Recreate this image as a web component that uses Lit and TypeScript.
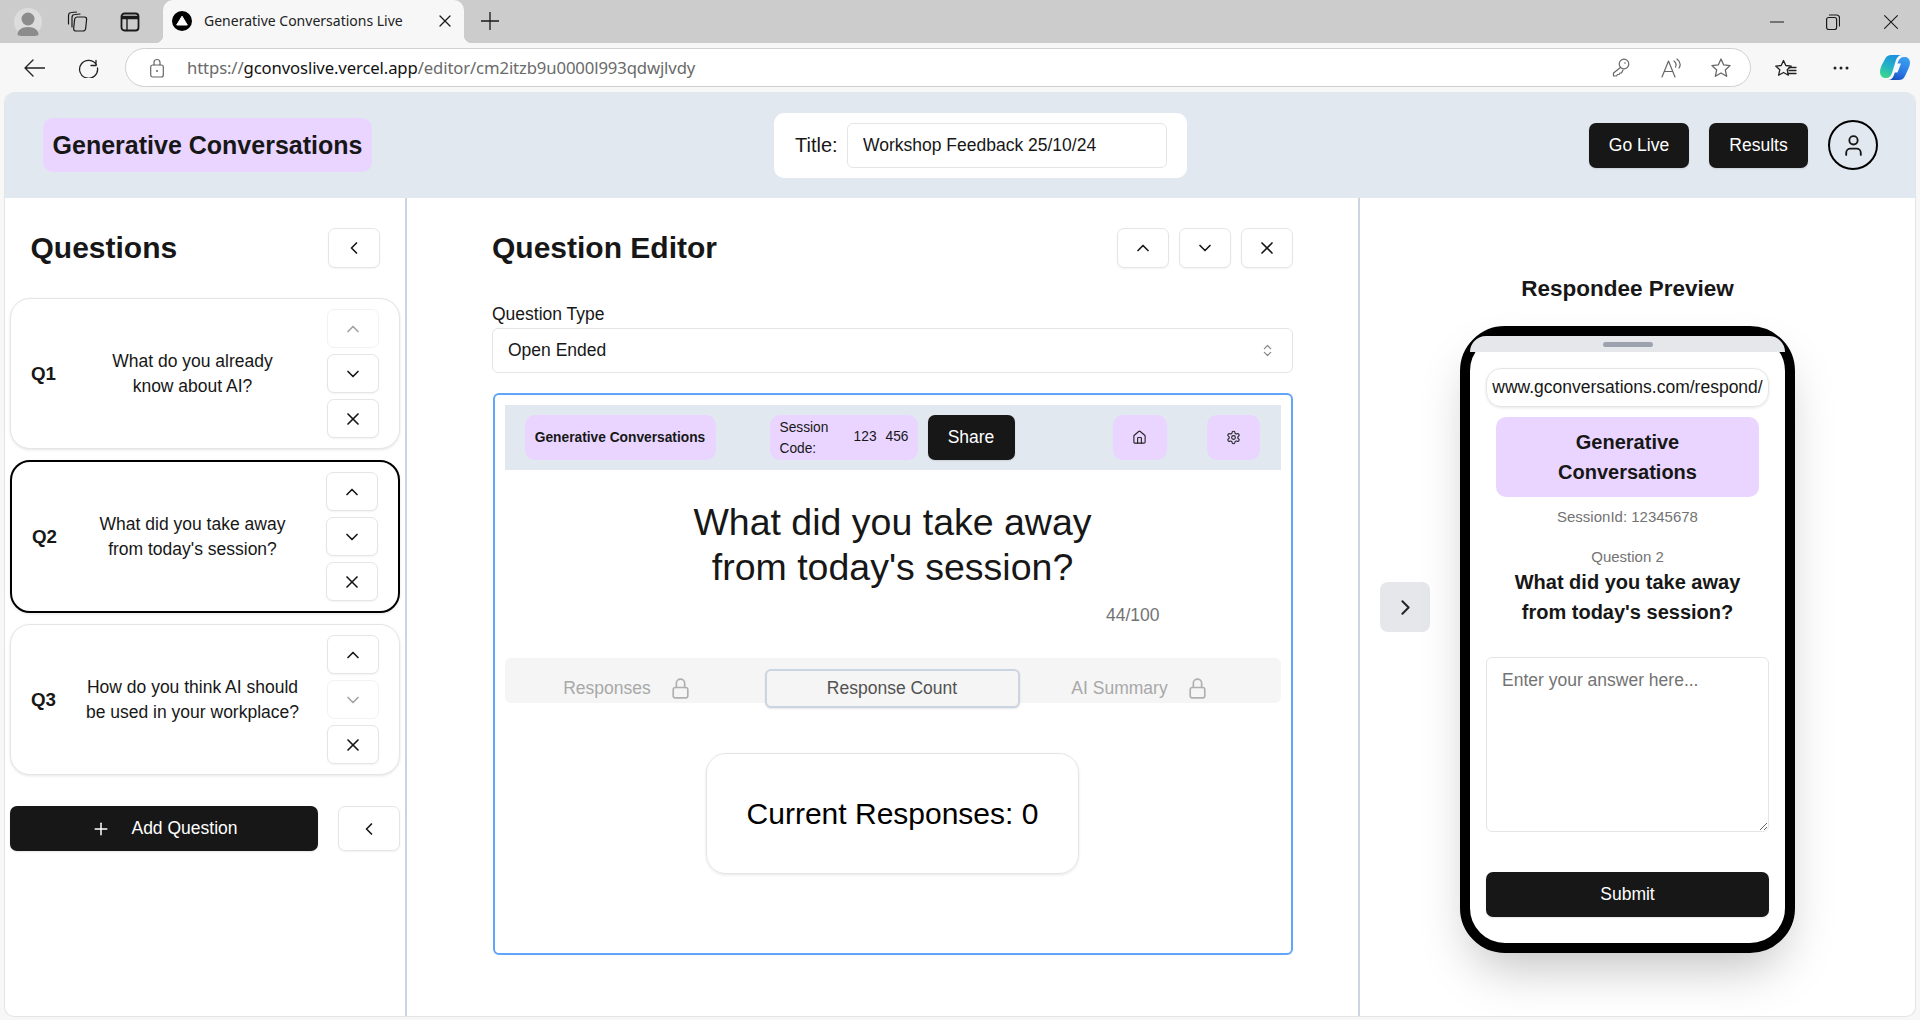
import { LitElement, html, css, svg } from "lit";
import { customElement } from "lit/decorators.js";

const lucide = (paths: unknown, size = 20, cls = "", sw = 2) => html`<svg class=${cls} width=${size} height=${size} viewBox="0 0 24 24" fill="none" stroke="currentColor" stroke-width=${sw} stroke-linecap="round" stroke-linejoin="round">${paths}</svg>`;
const up = svg`<path d="m18 15-6-6-6 6"/>`;
const down = svg`<path d="m6 9 6 6 6-6"/>`;
const left = svg`<path d="m15 18-6-6 6-6"/>`;
const right = svg`<path d="m9 18 6-6-6-6"/>`;
const cross = svg`<path d="M18 6 6 18"/><path d="m6 6 12 12"/>`;
const plus = svg`<path d="M5 12h14"/><path d="M12 5v14"/>`;
const lock = svg`<rect x="5" y="11" width="14" height="10" rx="2"/><path d="M8 11V7a4 4 0 0 1 8 0v4"/>`;
const user = svg`<circle cx="12" cy="7" r="4"/><path d="M19 21v-2a4 4 0 0 0-4-4H9a4 4 0 0 0-4 4v2"/>`;
const updown = svg`<path d="m7 15 5 5 5-5"/><path d="m7 9 5-5 5 5"/>`;
const house = svg`<path d="M15 21v-8a1 1 0 0 0-1-1h-4a1 1 0 0 0-1 1v8"/><path d="M3 10a2 2 0 0 1 .709-1.528l7-5.999a2 2 0 0 1 2.582 0l7 5.999A2 2 0 0 1 21 10v9a2 2 0 0 1-2 2H5a2 2 0 0 1-2-2z"/>`;
const gear = svg`<path d="M12.22 2h-.44a2 2 0 0 0-2 2v.18a2 2 0 0 1-1 1.73l-.43.25a2 2 0 0 1-2 0l-.15-.08a2 2 0 0 0-2.73.73l-.22.38a2 2 0 0 0 .73 2.73l.15.1a2 2 0 0 1 1 1.72v.51a2 2 0 0 1-1 1.74l-.15.09a2 2 0 0 0-.73 2.73l.22.38a2 2 0 0 0 2.73.73l.15-.08a2 2 0 0 1 2 0l.43.25a2 2 0 0 1 1 1.73V20a2 2 0 0 0 2 2h.44a2 2 0 0 0 2-2v-.18a2 2 0 0 1 1-1.73l.43-.25a2 2 0 0 1 2 0l.15.08a2 2 0 0 0 2.73-.73l.22-.39a2 2 0 0 0-.73-2.73l-.15-.08a2 2 0 0 1-1-1.74v-.5a2 2 0 0 1 1-1.74l.15-.09a2 2 0 0 0 .73-2.73l-.22-.38a2 2 0 0 0-2.73-.73l-.15.08a2 2 0 0 1-2 0l-.43-.25a2 2 0 0 1-1-1.73V4a2 2 0 0 0-2-2z"/><circle cx="12" cy="12" r="3"/>`;

const raw = (w: number, h: number, body: unknown, cls = "") => html`<svg class=${cls} width=${w} height=${h} viewBox="0 0 ${w} ${h}" fill="none" stroke="currentColor" stroke-width="1.2" stroke-linecap="round" stroke-linejoin="round">${body}</svg>`;

interface Q { n: string; a: string; b: string; upOff?: boolean; downOff?: boolean; sel?: boolean }
const questions: Q[] = [
  { n: "Q1", a: "What do you already", b: "know about AI?", upOff: true },
  { n: "Q2", a: "What did you take away", b: "from today's session?", sel: true },
  { n: "Q3", a: "How do you think AI should", b: "be used in your workplace?", downOff: true },
];

@customElement("app-root")
export class AppRoot extends LitElement {
  static styles = css`
    :host { display: flex; flex-direction: column; width: 1920px; height: 1020px; overflow: hidden; background: #f7f7f7; color: #171717; font-family: "Liberation Sans", Arial, sans-serif; font-size: 17.5px; line-height: 25px; }
    * { box-sizing: border-box; }
    svg { display: block; flex: none; }
    button { font: inherit; color: inherit; background: none; border: 0; padding: 0; }

    .strip { height: 43px; flex: none; background: #cccccc; display: flex; align-items: center; color: #1a1a1a; }
    .profile { margin-left: 14px; }
    .coll { margin-left: 24px; }
    .vt { margin-left: 32px; }
    .tab { position: relative; align-self: stretch; margin-left: 23px; width: 301px; background: #f7f7f7; border-radius: 10px 10px 0 0; display: flex; align-items: center; padding: 0 0 1px 9px; }
    .tab::before, .tab::after { content: ""; position: absolute; bottom: 0; width: 8px; height: 8px; }
    .tab::before { left: -8px; background: radial-gradient(circle at 0 0, #ccc 8px, #f7f7f7 8.5px); }
    .tab::after { right: -8px; background: radial-gradient(circle at 100% 0, #ccc 8px, #f7f7f7 8.5px); }
    .tabtitle { margin-left: 12px; width: 235px; font: 14px/20px "Noto Sans", sans-serif; color: #222; white-space: nowrap; }
    .newtab { margin-left: 17px; margin-bottom: 1px; }
    .win { margin-left: auto; display: flex; align-items: center; padding-right: 22px; }
    .win .rs { margin-left: 42px; }
    .win .cl { margin-left: 44px; }

    .bar { height: 49px; flex: none; background: #f7f7f7; display: flex; align-items: center; color: #222; }
    .back { margin-left: 24px; }
    .reload { margin-left: 33px; margin-right: 1px; }
    .addr { margin-left: 25px; width: 1626px; height: 39px; background: #fff; border: 1.5px solid #d0d0d0; border-radius: 20px; display: flex; align-items: center; padding: 0 19px 0 24px; color: #666; }
    .url { margin-left: 23px; font: 16.7px/24px "Noto Sans", sans-serif; letter-spacing: -0.12px; color: #6a6a6a; white-space: nowrap; flex: 1; }
    .url b { font-weight: 400; color: #111; }
    .addr .rd { margin-left: 31px; }
    .addr .st { margin-left: 29px; }
    .fav { margin-left: 24px; }
    .dots { margin-left: 36px; }
    .copilot { margin-left: 31px; }

    .page { flex: 1; min-height: 0; margin: 0 4px 3px; background: #fff; border: 1px solid #e4e4e4; border-top: 0; border-radius: 10px; overflow: hidden; display: flex; flex-direction: column; }
    .top { height: 106px; flex: none; background: #e2e8f0; display: flex; align-items: center; justify-content: space-between; padding: 0 37px 0 38px; }
    .brand { width: 329px; height: 54px; background: #e9d5ff; border-radius: 10px; display: flex; align-items: center; justify-content: center; font-size: 25px; font-weight: 700; white-space: nowrap; }
    .titlebox { width: 413px; height: 65px; background: #fff; border-radius: 10px; display: flex; align-items: center; padding: 0 20px 0 21px; font-size: 20px; }
    .titlebox input { margin-left: auto; width: 320px; height: 45px; border: 1px solid #e5e5e5; border-radius: 6px; padding: 0 15px; font: 17.5px "Liberation Sans", Arial, sans-serif; color: #171717; background: #fff; }
    .actions { display: flex; align-items: center; gap: 20px; }
    .dark { background: #171717; color: #fff; border-radius: 7px; height: 45px; display: flex; align-items: center; justify-content: center; box-shadow: 0 1px 2px rgba(0,0,0,.1); }
    .golive { width: 100px; }
    .results { width: 99px; }
    .avatar { width: 50px; height: 50px; border: 2.5px solid #000; border-radius: 50%; display: flex; align-items: center; justify-content: center; color: #171717; }

    .main { flex: 1; min-height: 0; display: flex; }
    .side { width: 402px; flex: none; border-right: 2px solid #cbd5e1; padding: 30px 0 0 5px; }
    .head { display: flex; align-items: center; justify-content: space-between; height: 40px; padding: 0 25px 0 20.500px; }
    h2 { margin: 0; font-size: 30px; line-height: 40px; font-weight: 700; }
    .ib { width: 52px; height: 40px; background: #fff; border: 1px solid #e5e5e5; border-radius: 7px; display: flex; align-items: center; justify-content: center; box-shadow: 0 1px 2px rgba(0,0,0,.05); color: #171717; }
    .list { margin-top: 30px; display: flex; flex-direction: column; gap: 11px; width: 390px; }
    .card { display: grid; grid-template-columns: 52px 1fr 52px; align-items: center; border: 1px solid #e5e5e5; border-radius: 20px; padding: 10px 20px 10px 20px; background: #fff; box-shadow: 0 1px 3px rgba(0,0,0,.1); }
    .card.sel { border: 2px solid #000; }
    .qn { font-size: 18.75px; font-weight: 700; }
    .qt { text-align: center; white-space: nowrap; padding-right: 25px; }
    .stack { display: flex; flex-direction: column; gap: 6px; }
    .stack .ib { height: 39px; }
    .ib.off { border-color: #f2f2f2; color: #a3a3a3; box-shadow: none; }
    .addrow { margin: 31px 0 0; display: flex; gap: 20px; }
    .add { width: 308px; gap: 0; }
    .add span { margin-left: 20px; }
    .add svg { margin-left: 1px; }
    .ib.wide { width: 61.500px; height: 45px; }

    .center { width: 953px; flex: none; border-right: 2px solid #cbd5e1; padding: 30px 65px 0 85px; }
    .ehead { display: flex; align-items: center; height: 40px; gap: 10px; }
    .ehead h2 { margin-right: auto; }
    .lab { margin-top: 34px; }
    .select { margin-top: 1px; height: 45px; border: 1px solid #e5e5e5; border-radius: 6px; display: flex; align-items: center; justify-content: space-between; padding: 0 17px 0 15px; }
    .select svg { opacity: .5; }
    .box { margin: 20px 0 0 1px; height: 562px; border: 2.5px solid #60a5fa; border-radius: 6px; padding: 9.500px 10.500px 9.500px 9.500px; }
    .mini { height: 65px; background: #e2e8f0; padding: 10px 20px; display: flex; align-items: stretch; }
    .mbrand { width: 191px; background: #e9d5ff; border-radius: 10px; display: flex; align-items: center; justify-content: center; font-size: 13.75px; font-weight: 700; white-space: nowrap; }
    .code { margin-left: 54px; width: 148px; background: #e9d5ff; border-radius: 10px; display: flex; align-items: center; justify-content: space-between; padding: 0 9px 0 10px; font-size: 13.75px; line-height: 20.6px; }
    .code i { font-style: normal; width: 50px; padding-top: 3px; }
    .code span { display: flex; gap: 9px; }
    .code b { font-weight: 400; }
    .share { margin-left: 10px; width: 87px; height: auto; }
    .mib { width: 54px; background: #e9d5ff; border-radius: 10px; display: flex; align-items: center; justify-content: center; color: #262626; }
    .mh { margin-left: 98px; }
    .mg { margin-left: 40.500px; width: 53px; }
    .qbig { margin: 30px 0 0; text-align: center; font-size: 37.5px; line-height: 45px; font-weight: 400; }
    .count { margin-top: 13.5px; padding-right: 121px; text-align: right; color: #737373; }
    .tabs { margin-top: 29.5px; height: 45px; background: #f5f5f5; border-radius: 6px; display: grid; grid-template-columns: 260px 255px 261px; padding-top: 11px; }
    .t { height: 39px; display: flex; align-items: center; justify-content: center; color: #a8a8a8; }
    .t svg { margin-left: 17px; color: #b0b0b0; }
    .t.l { padding-right: 13px; }
    .t.r { padding-right: 19px; }
    .t.on { background: #f5f5f5; border: 2px solid #cbd5e1; border-radius: 6px; color: #525252; box-shadow: 0 1px 2px rgba(0,0,0,.1); }
    .cnt { margin: 50px auto 0; width: 373px; height: 121px; border: 1px solid #e5e5e5; border-radius: 20px; box-shadow: 0 1px 3px rgba(0,0,0,.1); display: flex; align-items: center; justify-content: center; font-size: 30px; color: #000; }

    .prev { flex: 1; display: flex; padding-left: 20px; align-items: flex-start; }
    .arrow { margin-top: 384px; width: 50px; height: 50px; background: #e5e7eb; border-radius: 8px; display: flex; align-items: center; justify-content: center; color: #262626; }
    .pcol { margin-left: 30px; width: 335px; padding-top: 76px; }
    .ptitle { margin: 0; text-align: center; font-size: 22.5px; line-height: 30px; font-weight: 700; }
    .phone { margin-top: 22px; height: 627px; border: 10px solid #000; border-radius: 45px; background: #fff; box-shadow: 0 25px 50px -12px rgba(0,0,0,.25); }
    .notch { height: 16px; background: #e5e7eb; border-radius: 35px 35px 0 0; display: flex; align-items: center; justify-content: center; }
    .notch i { width: 50px; height: 5px; border-radius: 3px; background: #9ca3af; }
    .pbody { padding: 0 16px 0 16px; text-align: center; }
    .purl { margin-top: 15.5px; height: 39px; border: 1px solid #e5e5e5; border-radius: 15px; box-shadow: 0 1px 3px rgba(0,0,0,.1); display: flex; align-items: center; justify-content: center; white-space: nowrap; overflow: hidden; }
    .plogo { margin: 10.5px 10px 0; height: 80px; background: #e9d5ff; border-radius: 10px; display: flex; align-items: center; justify-content: center; font-size: 20px; line-height: 30px; font-weight: 700; }
    .sid { margin-top: 9.7px; font-size: 15px; line-height: 20px; color: #737373; }
    .qno { margin-top: 20px; font-size: 15px; line-height: 20px; color: #737373; }
    .qq { font-size: 20px; line-height: 30px; font-weight: 700; }
    textarea { display: block; margin-top: 30px; width: 100%; height: 175px; border: 1px solid #e5e5e5; border-radius: 6px; padding: 10px 15px; font: 17.5px/25px "Liberation Sans", Arial, sans-serif; color: #171717; background: #fff; resize: vertical; outline: none; }
    textarea::placeholder { color: #737373; opacity: 1; }
    .submit { margin-top: 40px; width: 100%; }
  `;

  private card(q: Q) {
    return html`<div class="card ${q.sel ? "sel" : ""}">
      <div class="qn">${q.n}</div>
      <div class="qt">${q.a}<br />${q.b}</div>
      <div class="stack">
        <button class="ib ${q.upOff ? "off" : ""}">${lucide(up)}</button>
        <button class="ib ${q.downOff ? "off" : ""}">${lucide(down)}</button>
        <button class="ib">${lucide(cross)}</button>
      </div>
    </div>`;
  }

  private chrome() {
    return html`
      <div class="strip">
        <svg class="profile" width="28" height="28" viewBox="0 0 28 28"><circle cx="14" cy="14" r="14" fill="#dcdcdc"/><circle cx="14" cy="11" r="6.500" fill="#8c8c8c"/><path d="M3.500 27c0-5 4-8 10.500-8s10.500 3 10.500 8c-2 1-6 1.500-10.500 1.500S5.500 28 3.500 27z" fill="#8c8c8c"/></svg>
        ${raw(22, 21, svg`<rect x="7.500" y="6" width="12" height="14" rx="2.500" transform="skewX(-6) translate(2 0)"/><path d="M6 16V6.500C6 4.500 7 3.500 9 3.500L14 3M2.500 13V5C2.500 3 3.500 1.500 5.500 1.500L10.500 1"/>`, "coll")}
        ${raw(20, 20, svg`<rect x="1.500" y="1.500" width="17" height="17" rx="3" stroke-width="1.800"/><path d="M1.500 5.500h17" stroke-width="3.500" stroke-linecap="butt"/><path d="M7 5.500v13" stroke-width="1.400"/>`, "vt")}
        <div class="tab">
          <svg width="20" height="20" viewBox="0 0 20 20"><circle cx="10" cy="10" r="10" fill="#000"/><path d="M10 5.200 15.300 14H4.700z" fill="#fff" stroke="#fff" stroke-linejoin="round"/></svg>
          <div class="tabtitle">Generative Conversations Live</div>
          ${raw(12, 12, svg`<path d="M1 1l10 10M11 1 1 11" stroke-width="1.300"/>`)}
        </div>
        ${raw(18, 18, svg`<path d="M9 0v18M0 9h18" stroke-width="1.300"/>`, "newtab")}
        <div class="win">
          ${raw(14, 12, svg`<path d="M0 6h14" stroke-width="1.200"/>`)}
          ${raw(14, 16, svg`<rect x=".6" y="3.500" width="10" height="12" rx="2"/><path d="M3.500 1h7c2 0 3 1 3 3v8"/>`, "rs")}
          ${raw(14, 14, svg`<path d="M.6.6l12.800 12.800M13.400.6.6 13.400" stroke-width="1.100"/>`, "cl")}
        </div>
      </div>
      <div class="bar">
        ${raw(21, 18, svg`<path d="M1 9h19.500M9 1 1 9l8 8" stroke-width="1.300"/>`, "back")}
        ${raw(21, 21, svg`<path d="M18 3.500v5h-5M18.500 8A9 9 0 1 0 19.500 11" stroke-width="1.300"/>`, "reload")}
        <div class="addr">
          ${raw(14, 20, svg`<rect x=".7" y="7" width="12.600" height="12" rx="2"/><path d="M4 7V4.500a3 3 0 0 1 6 0V7"/><circle cx="7" cy="13" r="1" fill="currentColor" stroke="none"/>`)}
          <div class="url">https://<b>gconvoslive.vercel.app</b>/editor/cm2itzb9u0000l993qdwjlvdy</div>
          ${raw(18, 19, svg`<circle cx="12" cy="6" r="4.800"/><path d="M8.500 9.500 1.500 15v3h3l1-1.500h1.500l1-1.500h1.500l1.500-3"/><circle cx="13" cy="5" r=".8" fill="currentColor" stroke="none"/>`)}
          ${raw(21, 20, svg`<path d="M1 19 7.500 3l6.500 16M3.500 13.500h8M13 3c2 1.500 2.500 4 1.500 6M16 1c3 2.500 4 6 2 9"/>`, "rd")}
          ${raw(20, 20, svg`<path d="M10 1l2.700 5.900 6.400.7-4.800 4.300 1.400 6.400L10 15l-5.700 3.300 1.400-6.400L.9 7.600l6.400-.7z" stroke-width="1.300"/>`, "st")}
        </div>
        ${raw(22, 20, svg`<path d="M8 1l2.300 5 5.500.6-4.100 3.700 1.200 5.400L8 13 3.100 15.700l1.200-5.400L.2 6.600 5.700 6z" stroke-width="1.300" transform="translate(.5 1.500)"/><path d="M14 9.500h7M14 12.500h7M13 15.500h8" stroke-width="1.300"/>`, "fav")}
        <svg class="dots" width="16" height="4" viewBox="0 0 16 4"><circle cx="2" cy="2" r="1.500" fill="#222"/><circle cx="8" cy="2" r="1.500" fill="#222"/><circle cx="14" cy="2" r="1.500" fill="#222"/></svg>
        <svg class="copilot" width="30" height="27" viewBox="0 0 30 27">
          <defs>
            <linearGradient id="cl" x1="0.700" y1="0" x2="0.300" y2="1"><stop offset="0" stop-color="#1b8fe0"/><stop offset=".55" stop-color="#25b4c4"/><stop offset="1" stop-color="#3dd68c"/></linearGradient>
            <linearGradient id="cr" x1="0.700" y1="0" x2="0.300" y2="1"><stop offset="0" stop-color="#3aa0f0"/><stop offset=".6" stop-color="#2a78e4"/><stop offset="1" stop-color="#1a4fc0"/></linearGradient>
          </defs>
          <path d="M11 1h11c-3 0-5 2-6 5L12 19c-1 3-3 5-6 5H5C2 24 0 21 0 18c0-2 .5-4 1.500-6.500L5 5C6.500 2 8.500 1 11 1z" fill="url(#cl)"/>
          <path d="M19 26H8c3 0 5-2 6-5L18 8c1-3 3-5 6-5h1c3 0 5 2.500 5 5.500 0 2-.5 4-1.500 6L25 22c-1.500 3-3.500 4-6 4z" fill="url(#cr)"/>
          <path d="M16.500 9.500h4.500l-3.500 9h-4z" fill="#f4f9ff"/>
        </svg>
      </div>`;
  }

  render() {
    return html`
      ${this.chrome()}
      <div class="page">
        <div class="top">
          <div class="brand">Generative Conversations</div>
          <div class="titlebox">Title:<input value="Workshop Feedback 25/10/24" /></div>
          <div class="actions">
            <button class="dark golive">Go Live</button>
            <button class="dark results">Results</button>
            <div class="avatar">${lucide(user, 25, "", 1.8)}</div>
          </div>
        </div>
        <div class="main">
          <div class="side">
            <div class="head"><h2>Questions</h2><button class="ib">${lucide(left)}</button></div>
            <div class="list">${questions.map((q) => this.card(q))}</div>
            <div class="addrow">
              <button class="dark add">${lucide(plus, 20, "", 1.8)}<span>Add Question</span></button>
              <button class="ib wide">${lucide(left)}</button>
            </div>
          </div>
          <div class="center">
            <div class="ehead">
              <h2>Question Editor</h2>
              <button class="ib">${lucide(up)}</button>
              <button class="ib">${lucide(down)}</button>
              <button class="ib">${lucide(cross)}</button>
            </div>
            <div class="lab">Question Type</div>
            <div class="select">Open Ended ${lucide(updown, 15)}</div>
            <div class="box">
              <div class="mini">
                <div class="mbrand">Generative Conversations</div>
                <div class="code"><i>Session Code:</i><span><b>123</b><b>456</b></span></div>
                <button class="dark share">Share</button>
                <div class="mib mh">${lucide(house, 15, "", 1.8)}</div>
                <div class="mib mg">${lucide(gear, 15, "", 1.8)}</div>
              </div>
              <h1 class="qbig">What did you take away<br />from today's session?</h1>
              <div class="count">44/100</div>
              <div class="tabs">
                <div class="t l">Responses${lucide(lock, 25, "", 1.6)}</div>
                <div class="t on">Response Count</div>
                <div class="t r">AI Summary${lucide(lock, 25, "", 1.6)}</div>
              </div>
              <div class="cnt">Current Responses: 0</div>
            </div>
          </div>
          <div class="prev">
            <div class="arrow">${lucide(right, 25)}</div>
            <div class="pcol">
              <h3 class="ptitle">Respondee Preview</h3>
              <div class="phone">
                <div class="notch"><i></i></div>
                <div class="pbody">
                  <div class="purl">www.gconversations.com/respond/</div>
                  <div class="plogo"><span>Generative<br />Conversations</span></div>
                  <div class="sid">SessionId: 12345678</div>
                  <div class="qno">Question 2</div>
                  <div class="qq">What did you take away<br />from today's session?</div>
                  <textarea placeholder="Enter your answer here..."></textarea>
                  <button class="dark submit">Submit</button>
                </div>
              </div>
            </div>
          </div>
        </div>
      </div>
    `;
  }
}
